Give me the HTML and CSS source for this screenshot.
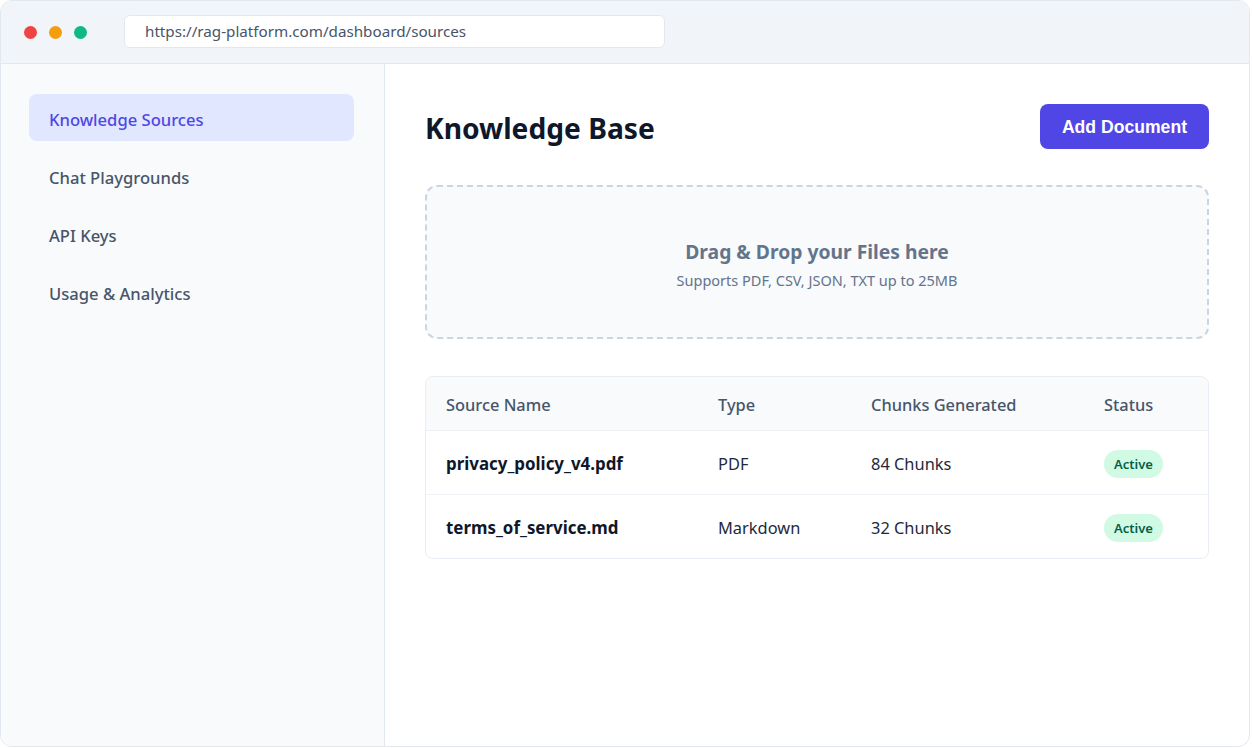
FILE: index.html
```html
<!DOCTYPE html>
<html lang="en">
<head>
	<meta charset="UTF-8">
	<title>Knowledge Base</title>
	<link rel="stylesheet" href="styles.css">
</head>
<body>
	<div class='window'>
		<div class='topbar'>
			<div class='dots'>
				<span class='dot red'></span>
				<span class='dot amber'></span>
				<span class='dot green'></span>
			</div>
			<div class='url'>https://rag-platform.com/dashboard/sources</div>
		</div>
		<div class='layout'>
			<div class='sidebar'>
				<div class='nav-item active'>Knowledge Sources</div>
				<div class='nav-item'>Chat Playgrounds</div>
				<div class='nav-item'>API Keys</div>
				<div class='nav-item'>Usage &amp; Analytics</div>
			</div>
			<div class='main'>
				<div class='header'>
					<h1>Knowledge Base</h1>
					<button class='add-btn'>Add Document</button>
				</div>
				<div class='dropzone'>
					<p class='drop-title'>Drag &amp; Drop your Files here</p>
					<p class='drop-sub'>Supports PDF, CSV, JSON, TXT up to 25MB</p>
				</div>
				<div class='table-wrap'>
					<table>
						<thead>
							<tr>
								<th class='c-name'>Source Name</th>
								<th class='c-type'>Type</th>
								<th class='c-chunks'>Chunks Generated</th>
								<th class='c-status'>Status</th>
							</tr>
						</thead>
						<tbody>
							<tr>
								<td class='file'>privacy_policy_v4.pdf</td>
								<td>PDF</td>
								<td>84 Chunks</td>
								<td><span class='badge'>Active</span></td>
							</tr>
							<tr>
								<td class='file'>terms_of_service.md</td>
								<td>Markdown</td>
								<td>32 Chunks</td>
								<td><span class='badge'>Active</span></td>
							</tr>
						</tbody>
					</table>
				</div>
			</div>
		</div>
	</div>
</body>
</html>
```

FILE: styles.css
```css
*{
	margin: 0;
	padding: 0;
	box-sizing: border-box;
}
body{
	background: #fff;
	font-family: "Noto Sans", "Open Sans", sans-serif;
	color: #1e293b;
}
.window{
	width: 1250px;
	height: 747px;
	border: 1px solid #e2e8f0;
	border-radius: 12px;
	overflow: hidden;
	display: flex;
	flex-direction: column;
	background: #fff;
}
.topbar{
	height: 63px;
	flex-shrink: 0;
	background: #f1f5f9;
	border-bottom: 1px solid #e2e8f0;
	display: flex;
	align-items: center;
	padding: 0 23px;
	gap: 37px;
}
.dots{
	display: flex;
	gap: 12px;
}
.dot{
	width: 13px;
	height: 13px;
	border-radius: 50%;
}
.red{ background: #ef4444; }
.amber{ background: #f59e0b; }
.green{ background: #10b981; }
.url{
	width: 541px;
	height: 33px;
	margin-top: -1px;
	background: #fff;
	border: 1px solid #e2e8f0;
	border-radius: 6px;
	padding-left: 20px;
	font-size: 15.2px;
	line-height: 31px;
	color: #475569;
}
.layout{
	flex: 1;
	display: flex;
}
.sidebar{
	width: 384px;
	flex-shrink: 0;
	background: #f8fafc;
	border-right: 1px solid #e2e8f0;
	padding: 30px 30px 0 28px;
}
.nav-item{
	padding: 14px 20px 10px;
	font-size: 16.6px;
	line-height: 23px;
	font-weight: 500;
	color: #475569;
	border-radius: 8px;
	margin-bottom: 11px;
}
.nav-item.active{
	background: #e0e7ff;
	color: #4f46e5;
}
.main{
	flex: 1;
	padding: 40px 40px 0 40px;
}
.header{
	display: flex;
	justify-content: space-between;
	align-items: center;
	margin-bottom: 36px;
}
h1{
	font-size: 28.2px;
	font-weight: 700;
	color: #0f172a;
	padding-top: 2px;
}
.add-btn{
	background: #4f46e5;
	color: #fff;
	border: none;
	border-radius: 8px;
	font-family: "Liberation Sans", Arial, sans-serif;
	font-weight: 700;
	font-size: 17.6px;
	line-height: 22px;
	padding: 12px 22px 11px;
}
.dropzone{
	border: 2px dashed #cbd5e1;
	border-radius: 12px;
	background: #f8fafc;
	height: 154px;
	padding-top: 4px;
	display: flex;
	flex-direction: column;
	justify-content: center;
	align-items: center;
	color: #64748b;
	margin-bottom: 37px;
}
.drop-title{
	font-size: 19.3px;
	font-weight: 700;
	line-height: 28px;
	margin-bottom: 4px;
}
.drop-sub{
	font-size: 14.5px;
	line-height: 20px;
}
.table-wrap{
	border: 1px solid #e9eef4;
	border-radius: 8px;
	overflow: hidden;
}
table{
	width: 100%;
	border-collapse: collapse;
	table-layout: fixed;
	font-size: 16.4px;
}
th{
	background: #f8fafc;
	text-align: left;
	font-weight: 500;
	color: #475569;
	height: 53px;
	padding: 2px 20px 0;
	border-bottom: 1px solid #eef2f6;
}
td{
	padding: 3px 20px 0;
	height: 64px;
	color: #1e293b;
	border-bottom: 1px solid #eef2f6;
}
tbody tr:last-child td{
	border-bottom: none;
}
.c-name{ width: 272px; }
.c-type{ width: 153px; }
.c-chunks{ width: 233px; }
td.file{
	font-size: 16.9px;
	font-weight: 700;
	color: #0f172a;
}
.badge{
	display: inline-block;
	background: #d1fae5;
	color: #065f46;
	font-size: 13px;
	font-weight: 600;
	line-height: 28px;
	padding: 0 10px;
	border-radius: 14px;
}
```
